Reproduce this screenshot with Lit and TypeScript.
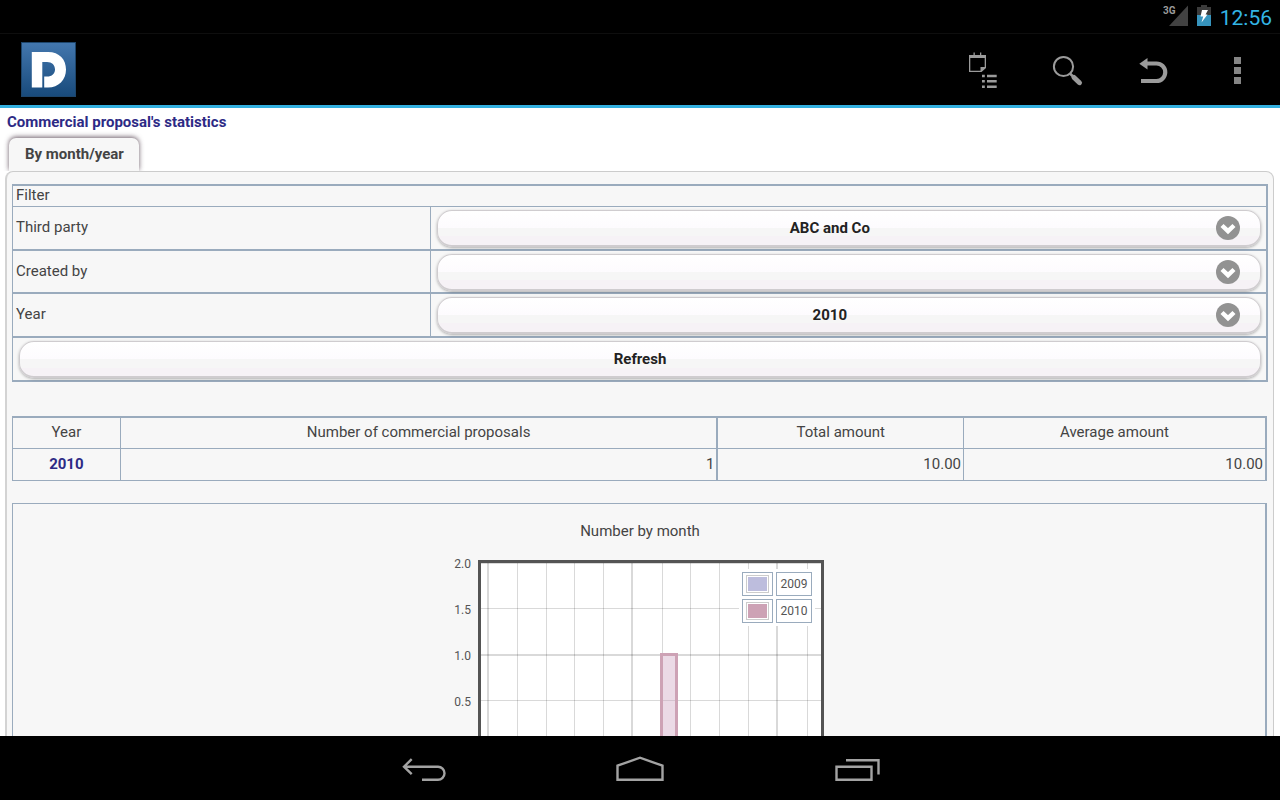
import { LitElement, html, svg, css } from "lit";
import { customElement, property } from "lit/decorators.js";

const GREY = "#9b9b9b";

@customElement("status-bar")
class StatusBar extends LitElement {
  static styles = css`
    :host {
      display: flex;
      justify-content: flex-end;
      align-items: center;
      gap: 9px;
      height: 33px;
      padding-right: 8px;
      border-bottom: 1px solid #0e0e0e;
    }
    .clock {
      color: #33b5e5;
      font-size: 21px;
      line-height: 26px;
      padding-top: 2px;
    }
    .net {
      font: bold 10px/12px Roboto, sans-serif;
      fill: #9b9b9b;
    }
  `;
  render() {
    return html`
      <svg width="25" height="33" viewBox="0 0 25 33" role="img" aria-label="Mobile signal">
        <path d="M25 5.500V26H6Z" fill="#424242" />
        <text class="net" x="0" y="14">3G</text>
      </svg>
      <svg width="14" height="33" viewBox="0 0 14 33" role="img" aria-label="Battery charging">
        <path d="M4 5H10V7H14V15H0V7H4Z" fill="#3c3c3c" />
        <path d="M0 15H14V26H0Z" fill="#3794bd" />
        <path d="M5 10H11L8.600 14.500H10.500L4.500 22.500L6.200 16.500H3.500Z" fill="#fff" />
      </svg>
      <time class="clock">12:56</time>
    `;
  }
}

@customElement("action-bar")
class ActionBar extends LitElement {
  static styles = css`
    :host {
      display: flex;
      align-items: center;
      height: 71px;
      border-bottom: 3px solid #33b0e0;
    }
    .logo {
      display: block;
      margin: 0 auto 0 21px;
    }
    .actions {
      display: flex;
    }
    button {
      display: block;
      padding: 0;
      border: 0;
      background: none;
    }
    svg {
      display: block;
    }
  `;
  render() {
    return html`
      <a class="logo" href="#" aria-label="Home">
        <svg width="55" height="55" viewBox="0 0 55 55">
          <defs>
            <linearGradient id="sky" x1="0" y1="0" x2="0" y2="1">
              <stop offset="0" stop-color="#4377ae" />
              <stop offset="1" stop-color="#184a7b" />
            </linearGradient>
          </defs>
          <rect x="0.500" y="0.500" width="54" height="54" fill="url(#sky)" stroke="#1d456b" />
          <path
            fill="#fff"
            d="M10.800 10H27C38.500 10 45 17.500 45 27.500C45 38 37.500 45.500 27 45.500H23.200V34.600H26C31 34.600 34 31.500 34 27.500C34 23 31 20 26 20H21.300V45.500H10.800Z"
          />
        </svg>
      </a>
      <div class="actions">
        <button aria-label="Agenda">
          <svg width="85" height="71" viewBox="0 0 85 71" fill=${GREY}>
            <path d="M29 21H46V34L41.500 38H29ZM30.300 24V36.700H40.500V33H44.700V24Z" fill-rule="evenodd" />
            <path d="M33.500 18.500H34.800V22H33.500ZM40 18.500H41.300V22H40Z" />
            <path
              d="M42 40.700H44.800V43.200H42ZM47 40.700H56.700V43.200H47ZM42 46H44.800V48.500H42ZM47 46H56.700V48.500H47ZM42 51.400H44.800V54H42ZM47 51.400H56.700V54H47Z"
            />
          </svg>
        </button>
        <button aria-label="Search">
          <svg width="85" height="71" viewBox="0 0 85 71" fill="none" stroke=${GREY}>
            <circle cx="38.500" cy="32.500" r="9.600" stroke-width="2" />
            <path d="M45 39.500L49 43.500" stroke-width="2.500" />
            <path d="M49 43.500L54.500 48.700" stroke-width="5" stroke-linecap="round" />
          </svg>
        </button>
        <button aria-label="Back">
          <svg width="85" height="71" viewBox="0 0 85 71" fill="none">
            <path d="M35 29.500H46.500A8.700 8.700 0 0 1 46.500 47H31" stroke=${GREY} stroke-width="4.200" />
            <path d="M29.300 29.700L37.500 24V35.500Z" fill=${GREY} />
          </svg>
        </button>
        <button aria-label="More options">
          <svg width="85" height="71" viewBox="0 0 85 71" fill="#858585">
            <path d="M39 23H46V30H39ZM39 33H46V40H39ZM39 43H46V50H39Z" />
          </svg>
        </button>
      </div>
    `;
  }
}

@customElement("nav-bar")
class NavBar extends LitElement {
  static styles = css`
    :host {
      display: flex;
      justify-content: center;
      gap: 152px;
      height: 64px;
      background: #000;
    }
    button {
      padding: 0;
      border: 0;
      background: none;
    }
    svg {
      display: block;
      fill: none;
      stroke: #a3a3a3;
      stroke-width: 2.4;
    }
  `;
  render() {
    return html`
      <button aria-label="Back">
        <svg width="64" height="64" viewBox="0 0 64 64">
          <path d="M12 30.700H46A6.500 6.500 0 0 1 46 43.700H30M19.700 23.200L12 30.700L19.700 38.200" />
        </svg>
      </button>
      <button aria-label="Home">
        <svg width="64" height="64" viewBox="0 0 64 64">
          <path d="M9.500 43.700V29.700L32 21.700L54.500 29.700V43.700Z" />
        </svg>
      </button>
      <button aria-label="Recent apps">
        <svg width="64" height="64" viewBox="0 0 64 64">
          <path d="M12.500 30.700H47.500V43.700H12.500ZM22 24.300H54.500V38.500" />
        </svg>
      </button>
    `;
  }
}

interface Field {
  id: string;
  label: string;
  value: string;
}

@customElement("filter-form")
class FilterForm extends LitElement {
  static styles = css`
    :host {
      display: block;
    }
    form {
      border: 2px solid #9aabbd;
      border-left-width: 1px;
    }
    .heading {
      height: 20px;
      padding-left: 3px;
      line-height: 19px;
      border-bottom: 1px solid #9aabbd;
    }
    .rows {
      display: grid;
      grid-auto-rows: 1fr;
      height: 131px;
    }
    .row {
      display: grid;
      grid-template-columns: 1fr 2fr;
      border-bottom: 2px solid #9aabbd;
    }
    label {
      padding-left: 3px;
      line-height: 40px;
      border-right: 1px solid #9aabbd;
    }
    .field {
      position: relative;
      padding: 3px 5px 0 6px;
    }
    select,
    .refresh {
      display: block;
      box-sizing: border-box;
      width: 100%;
      height: 37px;
      border: 1px solid #cfcccf;
      border-bottom-width: 2px;
      border-radius: 15px;
      background: linear-gradient(#ffffff 0%, #fdfbfe 50%, #f6f6f6 50%, #f6f6f6 75%, #f6f2f6 75%);
      box-shadow: 0 1px 3px rgba(0, 0, 0, 0.3);
      color: #222;
      font: bold 15px/20px Roboto, sans-serif;
    }
    select {
      appearance: none;
      padding: 0 46px 0 8px;
      text-align: center;
      text-align-last: center;
    }
    .arrow {
      position: absolute;
      top: 9px;
      right: 26px;
      pointer-events: none;
    }
    .submit {
      height: 42px;
      box-sizing: border-box;
      padding: 3px 5px 0 6px;
    }
  `;
  @property({ attribute: false }) fields: Field[] = [
    { id: "party", label: "Third party", value: "ABC and Co" },
    { id: "author", label: "Created by", value: "" },
    { id: "year", label: "Year", value: "2010" },
  ];
  render() {
    return html`
      <form @submit=${(e: Event) => e.preventDefault()}>
        <div class="heading">Filter</div>
        <div class="rows">
          ${this.fields.map(
            (f) => html`
              <div class="row">
                <label for=${f.id}>${f.label}</label>
                <div class="field">
                  <select id=${f.id}>
                    <option>${f.value}</option>
                  </select>
                  <svg class="arrow" width="24" height="24" viewBox="0 0 24 24" aria-hidden="true">
                    <circle cx="12" cy="12" r="12" fill="#929292" />
                    <path d="M6 9.500L12 15.200L18 9.500" fill="none" stroke="#fff" stroke-width="4.400" />
                  </svg>
                </div>
              </div>
            `,
          )}
        </div>
        <div class="submit"><button class="refresh">Refresh</button></div>
      </form>
    `;
  }
}

@customElement("stats-table")
class StatsTable extends LitElement {
  static styles = css`
    :host {
      display: block;
    }
    table {
      width: 100%;
      table-layout: fixed;
      border-collapse: separate;
      border-spacing: 0;
      border-top: 2px solid #9aabbd;
      border-left: 1px solid #9aabbd;
      border-right: 1px solid #9aabbd;
    }
    th,
    td {
      box-sizing: border-box;
      height: 32px;
      padding: 0 2px 2px;
      line-height: 20px;
      border-right: 1px solid #9aabbd;
      border-bottom: 1px solid #9aabbd;
      font-weight: normal;
      text-align: right;
    }
    th {
      text-align: center;
    }
    thead th {
      height: 31px;
    }
    .count {
      border-right-width: 2px;
    }
    .c-year {
      width: 8.6%;
    }
    .c-count {
      width: 47.7%;
    }
    .c-total {
      width: 19.6%;
    }
    a {
      color: #2d2a85;
      font-weight: bold;
      text-decoration: none;
    }
  `;
  render() {
    return html`
      <table>
        <colgroup>
          <col class="c-year" />
          <col class="c-count" />
          <col class="c-total" />
          <col />
        </colgroup>
        <thead>
          <tr>
            <th>Year</th>
            <th class="count">Number of commercial proposals</th>
            <th>Total amount</th>
            <th>Average amount</th>
          </tr>
        </thead>
        <tbody>
          <tr>
            <th><a href="#">2010</a></th>
            <td class="count">1</td>
            <td>10.00</td>
            <td>10.00</td>
          </tr>
        </tbody>
      </table>
    `;
  }
}

@customElement("month-chart")
class MonthChart extends LitElement {
  static styles = css`
    :host {
      display: block;
      border: 1px solid #9aabbd;
      border-right-width: 2px;
      min-height: 300px;
    }
    h2 {
      margin: 17px 0 0;
      padding-left: 2px;
      font-size: 15px;
      line-height: 20px;
      font-weight: normal;
      text-align: center;
    }
    .plot {
      position: relative;
      width: 374px;
      margin: 19px auto 0;
    }
    .plot svg {
      display: block;
      overflow: visible;
    }
    .tick {
      font: 12px Roboto, sans-serif;
      fill: #545454;
      text-anchor: end;
    }
    .legend {
      position: absolute;
      top: 9px;
      right: 11px;
      display: grid;
      gap: 3px;
      padding: 3px;
      background: #fff;
    }
    .entry {
      display: flex;
      gap: 3px;
      font-size: 12px;
      line-height: 22px;
      color: #545454;
    }
    .key,
    .name {
      border: 1px solid #9aabbd;
      box-sizing: border-box;
      height: 24px;
    }
    .key {
      width: 31px;
      padding: 2px 3px;
    }
    .swatch {
      height: 14px;
      border: 1px solid #ccc;
      padding: 1px;
    }
    .fill {
      height: 14px;
    }
    .name {
      width: 36px;
      text-align: center;
    }
    .y2009 {
      background: #bdbddd;
    }
    .y2010 {
      background: #cda2b5;
    }
  `;
  render() {
    const columns = [36, 65, 94, 122, 151, 180, 210, 238, 267, 296, 325, 355];
    const ticks = ["2.0", "1.5", "1.0", "0.5"];
    return html`
      <h2>Number by month</h2>
      <div class="plot">
        <svg width="374" height="240" viewBox="0 0 374 240" role="img" aria-label="Number by month">
          <rect x="27.500" y="1.500" width="343" height="186" fill="#fff" />
          ${columns.map(
            (x, i) =>
              svg`<rect x=${i % 5 ? x : x - 1} y="3" width=${i % 5 ? 1 : 2} height="184" fill="#000" fill-opacity="0.150" />`,
          )}
          ${ticks.map((label, i) => {
            const y = 2 + i * 46;
            return svg`
              <rect x="28" y=${y} width="341" height=${i % 2 ? 1 : 2} fill="#000" fill-opacity="0.150" />
              <text class="tick" x="19" y=${y + 6}>${label}</text>`;
          })}
          <rect x="209.500" y="94.500" width="15" height="93" fill="#cda2c0" fill-opacity="0.400" stroke="#cda2b5" stroke-width="3" />
          <rect x="27.500" y="1.500" width="343" height="186" fill="none" stroke="#545454" stroke-width="3" />
        </svg>
        <div class="legend">
          <div class="entry">
            <div class="key"><div class="swatch"><div class="fill y2009"></div></div></div>
            <div class="name">2009</div>
          </div>
          <div class="entry">
            <div class="key"><div class="swatch"><div class="fill y2010"></div></div></div>
            <div class="name">2010</div>
          </div>
        </div>
      </div>
    `;
  }
}

@customElement("app-root")
class AppRoot extends LitElement {
  static styles = css`
    :host {
      display: flex;
      flex-direction: column;
      height: 100vh;
      overflow: hidden;
      background: #000;
      color: #444;
      font: 15px/20px Roboto, sans-serif;
    }
    main {
      flex: 1;
      min-height: 0;
      overflow: hidden;
      background: #fff;
    }
    h1 {
      margin: 0;
      padding: 4px 7px 6px;
      color: #2d2a85;
      font-size: 15px;
      line-height: 20px;
    }
    .tab {
      display: block;
      width: fit-content;
      margin-left: 9px;
      padding: 6px 15px 7px 16px;
      border-radius: 7px 7px 0 0;
      background: #f7f7f7;
      box-shadow: 0 -1px 5px rgba(70, 50, 65, 0.8);
      clip-path: inset(-8px -8px 0 -8px);
      color: #444;
      font-weight: bold;
      text-decoration: none;
    }
    .panel {
      margin: 0 6px 0 5px;
      padding: 12px 5px;
      border: 1px solid #ccc;
      border-left: 2px solid #d3d3d3;
      border-radius: 8px;
      background: #f7f7f7;
    }
    stats-table {
      margin: 34px 1px 22px 0;
    }
    month-chart {
      margin-right: 1px;
    }
  `;
  render() {
    return html`
      <status-bar></status-bar>
      <action-bar></action-bar>
      <main>
        <h1>Commercial proposal's statistics</h1>
        <a class="tab" href="#">By month/year</a>
        <section class="panel">
          <filter-form></filter-form>
          <stats-table></stats-table>
          <month-chart></month-chart>
        </section>
      </main>
      <nav-bar></nav-bar>
    `;
  }
}
